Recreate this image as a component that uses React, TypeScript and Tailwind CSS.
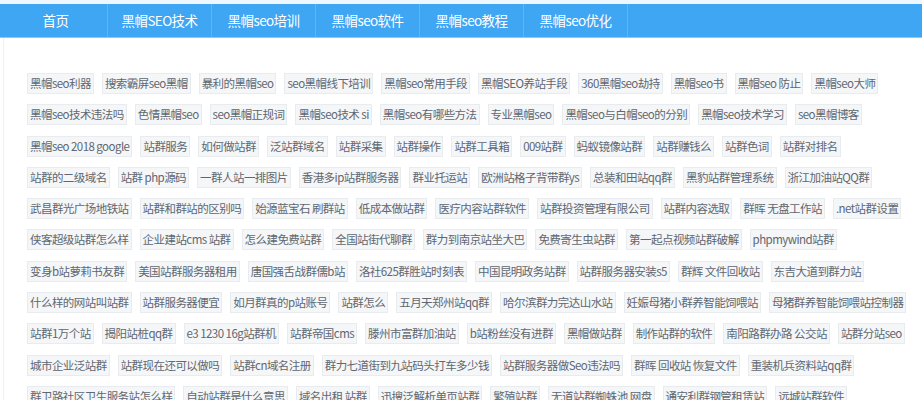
const navItems = ['首页', '黑帽SEO技术', '黑帽seo培训', '黑帽seo软件', '黑帽seo教程', '黑帽seo优化'];

const tagRows: string[][] = [
  ['黑帽seo利器', '搜索霸屏seo黑帽', '暴利的黑帽seo', 'seo黑帽线下培训', '黑帽seo常用手段', '黑帽SEO养站手段', '360黑帽seo劫持', '黑帽seo书', '黑帽seo 防止', '黑帽seo大师'],
  ['黑帽seo技术违法吗', '色情黑帽seo', 'seo黑帽正规词', '黑帽seo技术 si', '黑帽seo有哪些方法', '专业黑帽seo', '黑帽seo与白帽seo的分别', '黑帽seo技术学习', 'seo黑帽博客'],
  ['黑帽seo 2018 google', '站群服务', '如何做站群', '泛站群域名', '站群采集', '站群操作', '站群工具箱', '009站群', '蚂蚁镜像站群', '站群赚钱么', '站群色词', '站群对排名'],
  ['站群的二级域名', '站群 php源码', '一群人站一排图片', '香港多ip站群服务器', '群业托运站', '欧洲站格子背带群ys', '总装和田站qq群', '黑豹站群管理系统', '浙江加油站QQ群'],
  ['武昌群光广场地铁站', '站群和群站的区别吗', '始源蓝宝石 刷群站', '低成本做站群', '医疗内容站群软件', '站群投资管理有限公司', '站群内容选取', '群晖 无盘工作站', '.net站群设置'],
  ['侠客超级站群怎么样', '企业建站cms 站群', '怎么建免费站群', '全国站街代聊群', '群力到南京站坐大巴', '免费寄生虫站群', '第一起点视频站群破解', 'phpmywind站群'],
  ['变身b站萝莉书友群', '美国站群服务器租用', '唐国强舌战群儒b站', '洛社625群胜站时刻表', '中国昆明政务站群', '站群服务器安装s5', '群辉 文件回收站', '东吉大道到群力站'],
  ['什么样的网站叫站群', '站群服务器便宜', '如月群真的p站账号', '站群怎么', '五月天郑州站qq群', '哈尔滨群力完达山水站', '妊娠母猪小群养智能饲喂站', '母猪群养智能饲喂站控制器'],
  ['站群1万个站', '揭阳站桩qq群', 'e3 1230 16g站群机', '站群帝国cms', '滕州市富群加油站', 'b站粉丝没有进群', '黑帽做站群', '制作站群的软件', '南阳路群办路 公交站', '站群分站seo'],
  ['城市企业泛站群', '站群现在还可以做吗', '站群cn域名注册', '群力七道街到九站码头打车多少钱', '站群服务器做Seo违法吗', '群晖 回收站 恢复文件', '重装机兵资料站qq群'],
  ['群卫路社区卫生服务站怎么样', '自动站群是什么意思', '域名出租 站群', '迅搜泛解析单页站群', '繁殖站群', '无道站群蜘蛛池 网盘', '通安利群钢管租赁站', '远城站群软件'],
];

export default function App() {
  return (
    <div className="min-h-[400px] bg-white font-['Noto_Sans_CJK_SC','Noto_Sans',sans-serif]">
      {/* Top navigation */}
      <div className="h-[4px] bg-[#eef7fe]" />
      <nav className="flex h-[34px] border-b border-[#8ccaf6] bg-[#3fa6f3] pl-[4px]">
        {navItems.map((item) => (
          <a
            key={item}
            href="#"
            className="flex w-[104px] items-center justify-center border-r border-[#5cb5f5] text-[13.5px] tracking-[-0.6px] text-white"
          >
            {item}
          </a>
        ))}
      </nav>

      {/* Tag cloud */}
      <div className="ml-[3px] border-l border-[#f0f0f0] pl-[23px] pt-[35px]">
        <div className="flex flex-col gap-y-[10.3px]">
          {tagRows.map((row, i) => (
            <div key={i} className="flex gap-x-[8px]">
              {row.map((tag) => (
                <a
                  key={tag}
                  href="#"
                  className="h-[21px] whitespace-nowrap border border-[#e9ecef] bg-[#f4f6f8] px-[2px] text-[11.5px] leading-[19px] tracking-[-0.55px] text-[#5f6770]"
                >
                  {tag}
                </a>
              ))}
            </div>
          ))}
        </div>
      </div>
    </div>
  );
}
